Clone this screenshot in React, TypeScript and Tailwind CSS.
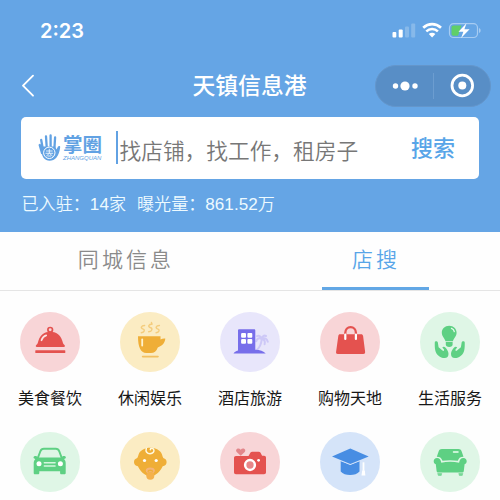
import type { ReactNode } from "react";

const cjk = "font-['Liberation_Sans','Noto_Sans_CJK_SC',sans-serif]";

const handPath =
  "M14.800 30.200c.1-1.300 2.700-1.500 3 .1l.8 5 3.900 3.300c1 .9 2.200-.2 1.300-1.300l-1.500-1.900c1-1.100 2.300-.8 3.300.4 1.400 1.700 2.800 3.500 2.900 5.900.1 2.800-1.300 4.300-4 4.300-4.400 0-8.300-3.500-9.200-7.600-.6-2.700-.6-5.500-.5-8.200z";

const categories: { id: string; label?: string; bg: string; icon: ReactNode }[] = [
  {
    id: "food",
    label: "美食餐饮",
    bg: "bg-[#f8d5d7]",
    icon: (
      <g fill="#e4524f">
        <circle cx="30.200" cy="17.800" r="2.300" fill="none" stroke="#e4524f" strokeWidth="1.700" />
        <path d="M17 35c-1.500 0-1.700-1.200-.5-2.200 1.300-1 1.400-2.500 2-4.300C20.300 23 24.500 19.800 30.300 19.800S40.500 23 42.200 28.500c.6 1.800.8 3.300 2 4.300 1.200 1 1 2.200-.5 2.200z" />
        <rect x="15.300" y="38.200" width="30" height="2.900" rx=".6" />
        <path d="M21.500 28.300c.8-2.600 2.500-4.300 4.700-4.900" fill="none" stroke="#fbe3e3" strokeWidth="1.700" strokeLinecap="round" />
      </g>
    ),
  },
  {
    id: "leisure",
    label: "休闲娱乐",
    bg: "bg-[#fbecc3]",
    icon: (
      <g fill="#efae37">
        <path d="M18 24.300h22.500v3.200c1.600-.8 3.200-1.300 4.800-1-.2 4.500-3.500 7.600-7.500 8.900-1.400 3.600-3.600 5.600-7 5.600h-4.500C20.500 41 18 35 18 24.300z" />
        <path d="M22.200 27.500v6" stroke="#fff3cf" strokeWidth="1.800" strokeLinecap="round" />
        <rect x="21.800" y="43.800" width="17" height="1.600" rx=".8" opacity=".7" />
        <g fill="none" stroke="#efae37" strokeWidth="1.400" strokeLinecap="round" opacity=".5">
          <path d="M24.600 13.500c-3.500.3-4.300 2.500-1.900 3.300 2.600.8 1.800 3.600-1.400 3.900" />
          <path d="M32.200 12c-3.700.3-4.500 2.600-2 3.500 2.800.9 2 4-1.500 4.300M31.500 12v-1.500" />
          <path d="M39.400 13.500c-3.500.3-4.300 2.500-1.900 3.300 2.600.8 1.800 3.600-1.400 3.900" />
        </g>
      </g>
    ),
  },
  {
    id: "travel",
    label: "酒店旅游",
    bg: "bg-[#e8e6fb]",
    icon: (
      <g>
        <path d="M37 38c3.200-3.200 4.300-6.500 4.700-10.500M41.800 27c-2.800-1.500-4.800-.7-5.500 2.300M41.800 27c-1-3-3-3.600-4.800-2.800M42 27c0-2.800 2-4 4-3M42 27c3-1.500 5-.3 5.800 2.800M42 27c2.300.6 3.300 2.500 2.600 5.200" fill="none" stroke="#cdc8f7" strokeWidth="2" strokeLinecap="round" />
        <path d="M18 18.500c0-.8.500-1.300 1.300-1.300h14.800c.8 0 1.200.5 1.200 1.300v19.200c4.500 0 8.500 1.500 10.400 3.900H13.500c.8-1.300 2.300-2.400 4.500-3z" fill="#776eea" />
        <g fill="#fff">
          <rect x="21.100" y="21" width="4.900" height="4.700" rx="1" />
          <rect x="27.400" y="21" width="4.900" height="4.700" rx="1" />
          <rect x="21.100" y="27" width="4.900" height="4.700" rx="1" />
          <rect x="27.400" y="27" width="4.900" height="4.700" rx="1" />
        </g>
      </g>
    ),
  },
  {
    id: "shopping",
    label: "购物天地",
    bg: "bg-[#f8d5d7]",
    icon: (
      <g>
        <path d="M20 22.300h21.200c1.100 0 1.600.6 1.900 1.600l2 15.900c.2 1.500-.5 2.200-1.800 2.200H17.800c-1.300 0-2-.8-1.700-2.200l2.200-15.900c.2-1 .7-1.600 1.700-1.600z" fill="#e4524f" />
        <path d="M25.300 23v-2.200c0-3.400 2.300-5.700 5.300-5.700s5.300 2.300 5.300 5.700V23" fill="none" stroke="#e4524f" strokeWidth="2.300" />
        <path d="M25.300 22.500v4.500M35.900 22.500v4.500" stroke="#fff" strokeWidth="2.200" strokeLinecap="round" />
      </g>
    ),
  },
  {
    id: "services",
    label: "生活服务",
    bg: "bg-[#dff6e6]",
    icon: (
      <g fill="#5ed083">
        <path d="M29.200 13.800c-4.300 0-7.400 3-7.400 6.900 0 3.800 3 5.300 3.700 8.600h7.400c.7-3.300 3.700-4.800 3.700-8.600 0-3.900-3.100-6.900-7.400-6.900z" />
        <path d="M25.800 30h6.800v2.600c0 1.600-1.200 2.500-3.400 2.500s-3.400-.9-3.400-2.500z" />
        <path d="M31.500 16.300c1.600.6 2.600 1.800 2.800 3.400" fill="none" stroke="#e5faec" strokeWidth="1.300" strokeLinecap="round" />
        <path d={handPath} />
        <path transform="matrix(-1 0 0 1 59.500 0)" d={handPath} />
      </g>
    ),
  },
  {
    id: "car",
    bg: "bg-[#dff6e6]",
    icon: (
      <g>
        <path d="M17.500 26.800l2.800-7.500c.7-1.800 1.700-2.500 3.500-2.500h12c1.800 0 2.800.7 3.500 2.500l2.800 7.500" fill="none" stroke="#5ed083" strokeWidth="1.900" />
        <path d="M14.300 24.200c1.500-.5 3 .1 3.700 1.300h23.400c.7-1.200 2.200-1.800 3.700-1.300 1 .4 1 1.700.2 2.200l-1.300.7c1.300 1.300 1.700 2.500 1.700 4.400v9.500c0 .8-.5 1.300-1.300 1.300h-3c-.8 0-1.300-.5-1.300-1.300v-1.700H19.300V41c0 .8-.5 1.300-1.300 1.300h-3c-.8 0-1.300-.5-1.300-1.300v-9.500c0-1.900.4-3.100 1.700-4.400l-1.300-.7c-.8-.5-.8-1.800.2-2.200z" fill="#5ed083" />
        <g fill="#fff"><circle cx="19" cy="31.800" r="2.500" /><circle cx="40.400" cy="31.800" r="2.500" /></g>
        <path d="M24.300 30.800h10.800M24.300 34h10.800" stroke="#d5f6df" strokeWidth="1.400" strokeLinecap="round" />
      </g>
    ),
  },
  {
    id: "baby",
    bg: "bg-[#fbecc3]",
    icon: (
      <g>
        <path d="M30.300 15.800c5.500 0 10 2.400 11.700 6.600.5 1.300.7 2.600 1.300 3.700 2.200.6 3.400 2.200 3.300 4.200-.1 2.300-1.600 3.700-3.900 4-1.600 3.600-4 6.400-7 8.200-1.600 1-3.400 1.600-5.400 1.600s-3.800-.6-5.400-1.600c-3-1.800-5.400-4.600-7-8.200-2.300-.3-3.800-1.700-3.900-4-.1-2 1.100-3.600 3.300-4.200.6-1.100.8-2.400 1.300-3.700 1.700-4.200 6.200-6.600 11.700-6.600z" fill="#efae37" />
        <path d="M26.300 16.500c-1 2.900.8 5.200 3.700 5.200 3.100 0 4.600-2.300 3.700-4.200-.8-1.600-3.200-1.600-3.400.2" fill="none" stroke="#fff8df" strokeWidth="1.500" strokeLinecap="round" />
        <circle cx="24.500" cy="28.500" r="1.600" fill="#fff" />
        <circle cx="36.200" cy="28.500" r="1.600" fill="#fff" />
        <ellipse cx="30.300" cy="38.500" rx="4.500" ry="3.100" fill="#f4b47a" />
        <circle cx="30.300" cy="43.700" r="4" fill="#f4b14b" />
        <path d="M27.800 39.700c.7-2 4.300-2 5 0" fill="none" stroke="#efae37" strokeWidth="1.500" />
      </g>
    ),
  },
  {
    id: "photo",
    bg: "bg-[#f8d5d7]",
    icon: (
      <g>
        <path d="M20.700 23.700l-4-3.700c-2-2.500 1.700-5 4-2.300 2.300-2.700 6-.2 4 2.300z" fill="#e2868a" />
        <path d="M16 24h12.500l2-3.400c.4-.7 1-.9 1.700-.9h6.500c.8 0 1.300.3 1.700.9l1.700 3.200H44c1.300 0 2 .7 2 2v14.400c0 1.300-.7 2-2 2H16c-1.300 0-2-.7-2-2V26c0-1.300.7-2 2-2z" fill="#e4524f" />
        <circle cx="30" cy="33" r="4.900" fill="#e78688" stroke="#fff" strokeWidth="2.500" />
        <circle cx="38.600" cy="28.300" r="1.400" fill="#fff" />
      </g>
    ),
  },
  {
    id: "education",
    bg: "bg-[#d5e4f9]",
    icon: (
      <g>
        <path d="M20.700 29l9.500 3.800L39.500 29v10.500c-2 2.500-5.500 3.500-9.400 3.500-3.800 0-7.400-1-9.400-3.500z" fill="#478de3" />
        <path d="M12 24.500l18.300-8 18.400 8-18.400 7.400z" fill="#478de3" stroke="#d5e4f9" strokeWidth="2" paintOrder="stroke" />
        <path d="M43.500 30.300v8.500" stroke="#fff" strokeWidth="1.800" />
        <path d="M42.200 38.500h2.600l.6 5h-3.900z" fill="#fff" />
      </g>
    ),
  },
  {
    id: "furniture",
    bg: "bg-[#dff6e6]",
    icon: (
      <g fill="#5ed083">
        <path d="M16.800 24.700l1.900-5.400c.6-1.600 1.500-2.300 3.200-2.300h16.500c1.700 0 2.600.7 3.200 2.300l1.900 5.400c-3.500.1-4.900 1.500-5.700 4.100-4.700-.9-10.700-.9-15.300 0-.8-2.600-2.200-4-5.700-4.100z" />
        <path d="M17 26c2.600 0 3.800 1.600 4.300 4.700 5.600-1.300 12.200-1.300 17.800 0 .5-3.100 1.700-4.700 4.300-4.700 2 0 3.300 1.300 3.300 3.200 0 1.500-.8 2.600-2.100 3.100l-.8 6.600c-.2 1-.8 1.500-1.800 1.500H18.400c-1 0-1.600-.5-1.800-1.500l-.8-6.600c-1.300-.5-2.100-1.600-2.100-3.100 0-1.900 1.300-3.200 3.300-3.200z" />
        <path d="M17.700 41.500h4l-.5 2h-2.800zM38.800 41.500h4l-.6 2h-2.800z" stroke="#5ed083" strokeWidth=".7" opacity=".8" />
        <path d="M33.500 20h4.500" stroke="#ecfff2" strokeWidth="1.500" strokeLinecap="round" />
      </g>
    ),
  },
];

function StatusIcons() {
  return (
    <svg className="h-[18px] w-[90px]" viewBox="0 0 90 18" fill="none">
      <g fill="#fff">
        <rect x="1.500" y="10" width="3.800" height="5.500" rx="1" />
        <rect x="7.700" y="7.500" width="4" height="8" rx="1" />
        <g opacity=".22">
          <rect x="14" y="4.500" width="4" height="11" rx="1" />
          <rect x="20.200" y="1.500" width="4" height="14" rx="1" />
        </g>
      </g>
      <path d="M32.200 5.800c5.300-4.900 12.500-4.900 17.800 0" stroke="#fff" strokeWidth="2.700" />
      <path d="M35.300 9.300c3.400-3.200 8.200-3.200 11.600 0" stroke="#fff" strokeWidth="2.500" />
      <path d="M37.800 12.100c2-1.700 4.600-1.700 6.600 0L41.100 15.500z" fill="#fff" />
      <rect x="58.500" y="1.700" width="28" height="13.800" rx="4" stroke="#a7ccf2" strokeWidth="1.200" />
      <path d="M88 6v5c2.200-.9 2.200-4.100 0-5z" fill="#a7ccf2" />
      <path d="M62.500 3.500h8L67 13.700h-4.500c-1.300 0-2-.7-2-2V5.500c0-1.300.7-2 2-2z" fill="#60cf68" />
      <path d="M75.500 1.200L67.500 9.700h4.900l-2.300 6.300 8.500-8.800h-5.200z" fill="#fff" />
    </svg>
  );
}

function Logo() {
  return (
    <div className="flex h-[30px] w-[64px] gap-[2px] text-[#62a2e3]">
      <svg className="h-[30px] w-[23px] shrink-0" viewBox="0 0 23 30" fill="none">
        <g stroke="#62a2e3" strokeLinecap="round" strokeWidth="2.300">
          <path d="M5 17L3.200 7M8.700 14L8 3.500M12.600 14V2.500M16.500 14l.6-9.500M4 20L1.700 12" />
        </g>
        <path d="M4 13.500h13.200l1.300 3 1.500-3c.6-1 2.400-.8 2.200.6-.5 4-1.500 8-3.700 10.500-3.700 4.300-10 4.300-13 .2-1.700-2.300-2.400-6.500-1.500-11.300z" fill="#62a2e3" />
        <circle cx="11.300" cy="19.800" r="5.700" stroke="#fff" strokeWidth="1" />
        <path d="M8 18h6.600M7.500 20.300h7.600M11.300 15.800v4.500l-3 2.800M11.500 20.300l3 2.800M9.500 23h3.500" stroke="#fff" strokeWidth=".8" />
      </svg>
      <div className="flex w-[39px] flex-col pt-[2px]">
        <div className={"h-[20px] whitespace-nowrap text-[19.5px] leading-[20px] font-bold " + cjk}>掌圈</div>
        <div className="h-[6px] whitespace-nowrap font-['Liberation_Sans',sans-serif] text-[6px] leading-[6px] italic">ZHANGQUAN</div>
      </div>
    </div>
  );
}

export default function App() {
  return (
    <div className={"flex h-[500px] w-[500px] flex-col overflow-hidden bg-[#fefefe] " + cjk}>
      <header className="flex h-[232px] shrink-0 flex-col bg-[#65a5e5] text-white">
        <div className="flex h-[62px] items-center justify-between pr-[19px] pl-[40px]">
          <span className="font-['Inter',sans-serif] text-[20px] leading-none font-semibold">2:23</span>
          <StatusIcons />
        </div>
        <div className="grid h-[47px] grid-cols-[125px_1fr_125px] items-center">
          <svg className="ml-[20px] h-[24px] w-[16px]" viewBox="0 0 16 24" fill="none">
            <path d="M13 1.700L3 11.700 13 21.700" stroke="#fff" strokeWidth="1.900" strokeLinecap="round" strokeLinejoin="round" />
          </svg>
          <h1 className="pr-[1px] text-center text-[22.8px] leading-[32px] font-medium">天镇信息港</h1>
          <div className="flex h-[42px] w-[116px] items-center rounded-full border border-[#6496cb] bg-[#588ec6]">
            <svg className="h-[40px] w-[114px]" viewBox="0 0 114 40" fill="#fff">
              <circle cx="19.500" cy="20" r="2.700" />
              <circle cx="29" cy="20" r="4.600" />
              <circle cx="39" cy="20" r="2.700" />
              <path d="M57.500 7v26" stroke="#6c9dd0" strokeWidth="1" />
              <circle cx="86.300" cy="19.500" r="10.300" fill="none" stroke="#fff" strokeWidth="2.800" />
              <circle cx="86.300" cy="19.500" r="4" />
            </svg>
          </div>
        </div>
        <div className="mx-[21px] mt-[8px] flex h-[62px] items-center rounded-[5px] bg-white pr-[24px] pl-[17px]">
          <Logo />
          <div className="mb-[1px] ml-[14px] h-[33px] w-[1.5px] bg-[#62a2e3]" />
          <span className="mt-[7px] ml-[2px] flex-1 whitespace-nowrap text-[21.7px] leading-[32px] font-[350] text-[#777]">找店铺，找工作，租房子</span>
          <span className="mt-[2px] text-[22px] leading-[32px] font-medium text-[#58a5e8]">搜索</span>
        </div>
        <div className="mt-[14px] flex gap-[11px] pl-[21.5px] text-[17.1px] leading-[24px] font-[350] text-[#edfaff]">
          <span>已入驻：14家</span>
          <span>曝光量：861.52万</span>
        </div>
      </header>
      <nav className="flex h-[59px] shrink-0 border-b border-[#e5e5e5] text-[21px] leading-[30px] font-[350] tracking-[3.1px]">
        <div className="flex w-1/2 justify-center pt-[13px] pl-[2px] text-[#8a8a8a]">同城信息</div>
        <div className="flex w-1/2 flex-col items-center justify-between pt-[13px] text-[#58a5e8]">
          <span className="pl-[2px]">店搜</span>
          <div className="h-[3px] w-[107px] bg-[#62a7e5]" />
        </div>
      </nav>
      <main className="grid grid-cols-5 pt-[21px]">
        {categories.map((c) => (
          <div key={c.id} className="flex h-[120px] flex-col items-center">
            <div className={"h-[60px] w-[60px] shrink-0 rounded-full " + c.bg}>
              <svg className="h-[60px] w-[60px]" viewBox="0 0 60 60">{c.icon}</svg>
            </div>
            {c.label && <span className="mt-[15px] text-[16px] leading-[24px] text-[#171717]">{c.label}</span>}
          </div>
        ))}
      </main>
    </div>
  );
}
